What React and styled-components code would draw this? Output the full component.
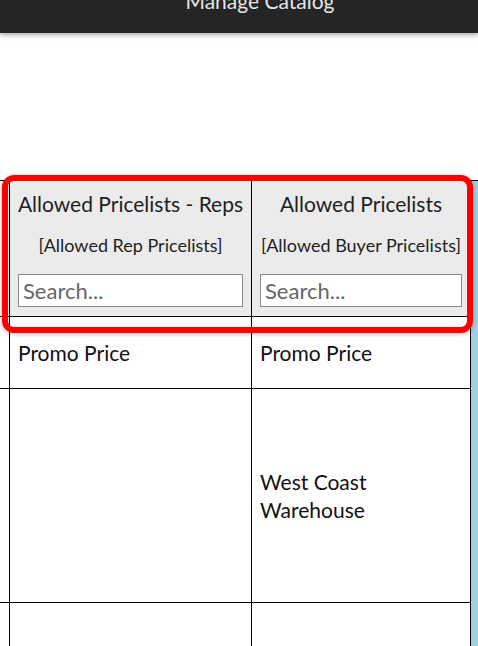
import React from "react";
import styled, { createGlobalStyle } from "styled-components";

const GlobalStyle = createGlobalStyle`
  html, body {
    margin: 0;
    padding: 0;
    background: #fff;
    overflow: hidden;
  }
  body {
    font-family: "Lato", "Noto Sans", sans-serif;
  }
`;

const rows = [
  { rep: "Promo Price", buyer: "Promo Price", height: 71 },
  { rep: "", buyer: "West Coast\nWarehouse", height: 213 },
  { rep: "", buyer: "", height: 60 },
];

function App() {
  return (
    <Page>
      <GlobalStyle />
      <TopBar>
        <Title>Manage Catalog</Title>
      </TopBar>
      <Gap />
      <TableWrap>
        <Grid>
          <HeadCell $stub />
          <HeadCell>
            <HeadTitle>Allowed Pricelists - Reps</HeadTitle>
            <HeadSub>[Allowed Rep Pricelists]</HeadSub>
            <Search placeholder="Search..." />
          </HeadCell>
          <HeadCell>
            <HeadTitle>Allowed Pricelists</HeadTitle>
            <HeadSub>[Allowed Buyer Pricelists]</HeadSub>
            <Search placeholder="Search..." />
          </HeadCell>
          <SideColumn />
          {rows.map((r, i) => (
            <React.Fragment key={i}>
              <Cell $h={r.height} />
              <Cell $h={r.height}>{r.rep}</Cell>
              <Cell $h={r.height}>{r.buyer}</Cell>
            </React.Fragment>
          ))}
        </Grid>
        <Highlight />
      </TableWrap>
    </Page>
  );
}

const Page = styled.div`
  width: 478px;
  height: 646px;
  overflow: hidden;
  display: flex;
  flex-direction: column;
`;

const TopBar = styled.div`
  height: 33px;
  flex-shrink: 0;
  background: #252525;
  box-shadow: 0 2px 5px rgba(0, 0, 0, 0.35);
  display: flex;
  justify-content: center;
  padding-left: 42px;
  position: relative;
  z-index: 2;
`;

const Title = styled.div`
  color: #e6e6e6;
  font-size: 21px;
  line-height: 24px;
  margin-top: -11px;
`;

const Gap = styled.div`
  height: 147px;
  flex-shrink: 0;
`;

const TableWrap = styled.div`
  position: relative;
  flex: 1;
`;

const Grid = styled.div`
  display: grid;
  grid-template-columns: 29px 241px 218px 1fr;
  gap: 1px;
  background: #000;
  padding-top: 1px;
  margin-left: -20px;
`;

const HeadCell = styled.div`
  height: 135px;
  box-sizing: border-box;
  background: ${(p) => (p.$stub ? "#fff" : "#ebebeb")};
  display: flex;
  flex-direction: column;
  align-items: center;
  padding: 11px 8px 0;
  color: #1e1e1e;
`;

const HeadTitle = styled.div`
  font-size: 21px;
  line-height: 24px;
  white-space: nowrap;
`;

const HeadSub = styled.div`
  font-size: 18px;
  line-height: 20px;
  margin-top: 19px;
  white-space: nowrap;
`;

const Search = styled.input`
  box-sizing: border-box;
  width: 100%;
  height: 33px;
  margin-top: 19px;
  border: 1px solid #8a8a8a;
  background: #fff;
  font-family: inherit;
  font-size: 22px;
  padding: 0 4px;
  outline: none;
  &::placeholder {
    color: #666;
  }
`;

const SideColumn = styled.div`
  grid-column: 4;
  grid-row: 1 / span 4;
  background: #9fcfe0;
`;

const Cell = styled.div`
  height: ${(p) => p.$h}px;
  background: #fff;
  box-sizing: border-box;
  padding: 0 8px;
  display: flex;
  align-items: center;
  white-space: pre-line;
  font-size: 21px;
  line-height: 28px;
  color: #111;
`;

const Highlight = styled.div`
  position: absolute;
  left: 2px;
  top: -5px;
  width: 471px;
  height: 158px;
  box-sizing: border-box;
  border: 6px solid #ff0000;
  border-radius: 12px;
  box-shadow: 0 1px 4px rgba(0, 0, 0, 0.3);
  pointer-events: none;
`;

export default App;
